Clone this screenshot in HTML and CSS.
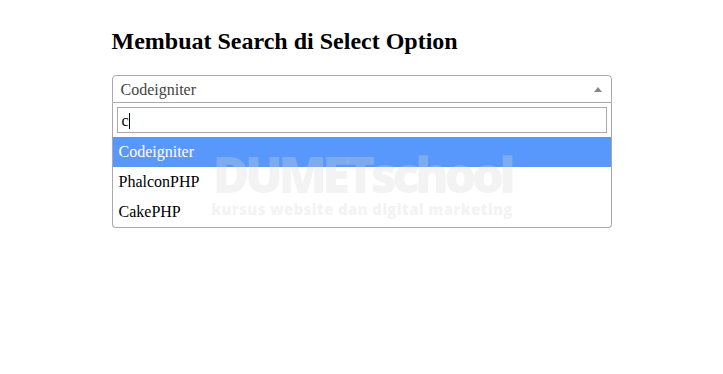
FILE: index.html
```html
<!DOCTYPE html>
<html lang="id">
<head>
    <meta charset="UTF-8">
    <meta name="viewport" content="width=device-width, initial-scale=1.0">
    <title>Membuat Search di Select Option</title>
    <link rel="stylesheet" href="styles.css">
</head>
<body>
    <div class="container">
        <h2>Membuat Search di Select Option</h2>

        <div class="select2">
            <div class="selection">
                <span class="rendered">Codeigniter</span>
                <span class="arrow"></span>
            </div>
            <div class="dropdown">
                <div class="search">
                    <div class="search-field">c<span class="caret"></span></div>
                </div>
                <ul class="results">
                    <li class="highlighted">Codeigniter</li>
                    <li>PhalconPHP</li>
                    <li>CakePHP</li>
                </ul>
            </div>
        </div>
    </div>

    <div class="watermark">
        <div class="wm-brand">DUMETschool</div>
        <div class="wm-tag">kursus website dan digital marketing</div>
    </div>
</body>
</html>
```

FILE: styles.css
```css
body {
    margin: 0;
    font-family: "Liberation Serif", "Times New Roman", serif;
    font-size: 16px;
    background: #fff;
    color: #000;
}
.container {
    width: 500px;
    margin: 0 auto;
    padding-top: 28px;
}
h2 {
    font-size: 24px;
    font-weight: bold;
    margin: 0 0 20px;
}
.select2 {
    width: 500px;
}
.selection {
    box-sizing: border-box;
    height: 28px;
    border: 1px solid #aaa;
    border-radius: 4px 4px 0 0;
    display: flex;
    align-items: center;
    justify-content: space-between;
    padding: 0 8px;
    color: #444;
}
.rendered {
    line-height: 28px;
    padding-top: 2px;
}
.arrow {
    width: 0;
    height: 0;
    border-style: solid;
    border-width: 0 4px 5px 4px;
    border-color: transparent transparent #888 transparent;
    margin-right: 1px;
}
.dropdown {
    border: 1px solid #aaa;
    border-top: none;
    border-radius: 0 0 4px 4px;
}
.search {
    padding: 4px;
}
.search-field {
    box-sizing: border-box;
    height: 26px;
    border: 1px solid #aaa;
    padding: 1px 4px 0;
    line-height: 24px;
    display: flex;
    align-items: center;
}
.caret {
    display: inline-block;
    width: 1px;
    height: 16px;
    background: #000;
}
.results {
    list-style: none;
    margin: 0;
    padding: 0;
}
.results li {
    padding: 6px;
    line-height: 18px;
}
.results li.highlighted {
    background: #5897fb;
    color: #fff;
}
.watermark {
    position: absolute;
    left: 211px;
    top: 150px;
    width: 302px;
    text-align: center;
    color: rgba(215, 215, 215, 0.3);
    font-family: "Open Sans", sans-serif;
    font-weight: 800;
    white-space: nowrap;
    pointer-events: none;
}
.wm-brand {
    font-size: 50px;
    line-height: 49px;
    letter-spacing: -4.3px;
}
.wm-tag {
    font-size: 15px;
    line-height: 20px;
    letter-spacing: 0.33px;
}
```
